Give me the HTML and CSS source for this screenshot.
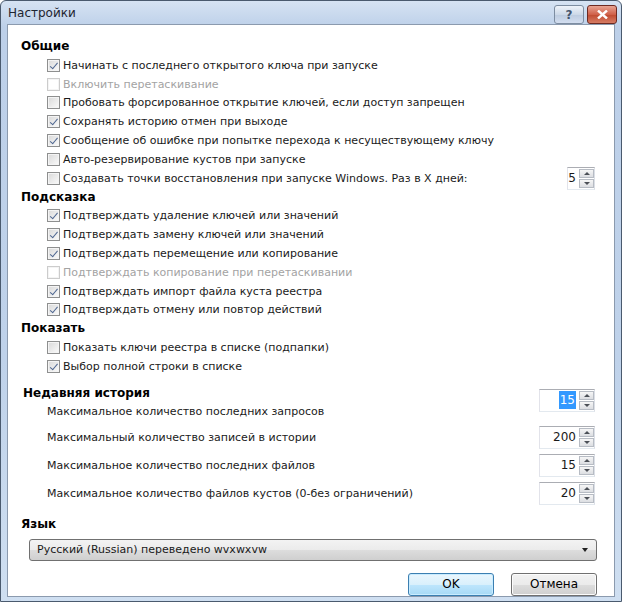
FILE: index.html
```html
<!DOCTYPE html>
<html lang="ru">
<head>
  <meta charset="UTF-8">
  <meta name="viewport" content="width=device-width, initial-scale=1.0">
  <title>Настройки</title>
  <link rel="stylesheet" href="styles.css">
</head>
<body>
  <div class="window">
    <div class="titlebar">
      <span class="title">Настройки</span>
      <div class="caption-btns">
        <span class="cap-btn cap-help">?</span>
        <span class="cap-btn cap-close">
          <svg width="11" height="9" viewBox="0 0 11 9"><path d="M1 0.5 L10 8.5 M10 0.5 L1 8.5" stroke="#fff" stroke-width="2.4"/></svg>
        </span>
      </div>
    </div>

    <div class="client">
      <h3 class="section-title">Общие</h3>
      <div class="check-list">
        <label class="check-row"><span class="box on"></span>Начинать с последнего открытого ключа при запуске</label>
        <label class="check-row disabled"><span class="box"></span>Включить перетаскивание</label>
        <label class="check-row"><span class="box"></span>Пробовать форсированное открытие ключей, если доступ запрещен</label>
        <label class="check-row"><span class="box on"></span>Сохранять историю отмен при выходе</label>
        <label class="check-row"><span class="box on"></span>Сообщение об ошибке при попытке перехода к несуществующему ключу</label>
        <label class="check-row"><span class="box"></span>Авто-резервирование кустов при запуске</label>
        <div class="check-row">
          <span class="box"></span>Создавать точки восстановления при запуске Windows. Раз в X дней:
          <div class="spin spin-small">
            <span class="spin-value">5</span>
            <span class="spin-btns"><span class="arrow up"></span><span class="arrow down"></span></span>
          </div>
        </div>
      </div>

      <h3 class="section-title">Подсказка</h3>
      <div class="check-list">
        <label class="check-row"><span class="box on"></span>Подтверждать удаление ключей или значений</label>
        <label class="check-row"><span class="box on"></span>Подтверждать замену ключей или значений</label>
        <label class="check-row"><span class="box on"></span>Подтверждать перемещение или копирование</label>
        <label class="check-row disabled"><span class="box"></span>Подтверждать копирование при перетаскивании</label>
        <label class="check-row"><span class="box on"></span>Подтверждать импорт файла куста реестра</label>
        <label class="check-row"><span class="box on"></span>Подтверждать отмену или повтор действий</label>
      </div>

      <h3 class="section-title">Показать</h3>
      <div class="check-list">
        <label class="check-row"><span class="box"></span>Показать ключи реестра в списке (подпапки)</label>
        <label class="check-row"><span class="box on"></span>Выбор полной строки в списке</label>
      </div>

      <div class="history-head">
        <div>
          <h3 class="section-title history-title">Недавняя история</h3>
          <div class="history-label">Максимальное количество последних запросов</div>
        </div>
        <div class="spin spin-first">
          <span class="spin-value"><span class="selected">15</span></span>
          <span class="spin-btns"><span class="arrow up"></span><span class="arrow down"></span></span>
        </div>
      </div>
      <div class="history-row">
        <span class="history-label">Максимальный количество записей в истории</span>
        <div class="spin">
          <span class="spin-value">200</span>
          <span class="spin-btns"><span class="arrow up"></span><span class="arrow down"></span></span>
        </div>
      </div>
      <div class="history-row">
        <span class="history-label">Максимальное количество последних файлов</span>
        <div class="spin">
          <span class="spin-value">15</span>
          <span class="spin-btns"><span class="arrow up"></span><span class="arrow down"></span></span>
        </div>
      </div>
      <div class="history-row">
        <span class="history-label">Максимальное количество файлов кустов (0-без ограничений)</span>
        <div class="spin">
          <span class="spin-value">20</span>
          <span class="spin-btns"><span class="arrow up"></span><span class="arrow down"></span></span>
        </div>
      </div>

      <h3 class="section-title lang-title">Язык</h3>
      <div class="combo">
        <span>Русский (Russian) переведено wvxwxvw</span>
        <span class="combo-arrow"></span>
      </div>

      <div class="buttons">
        <button class="btn btn-default">OK</button>
        <button class="btn">Отмена</button>
      </div>
    </div>
  </div>
</body>
</html>
```

FILE: styles.css
```css
* {
  margin: 0;
  padding: 0;
  box-sizing: border-box;
}

body {
  width: 622px;
  height: 602px;
  font-family: 'DejaVu Sans', Tahoma, sans-serif;
  font-size: 11px;
  color: #1a1a1a;
  background-color: #fff;
  overflow: hidden;
}

.window {
  display: flex;
  flex-direction: column;
  width: 622px;
  height: 602px;
  border: 1px solid #4a5a6e;
  border-radius: 6px 6px 0 0;
  background: linear-gradient(#d6e3f3, #bdd0e9 26px, #bfd2ea 60%, #cfdff1);
}

.titlebar {
  display: flex;
  align-items: center;
  height: 25px;
  padding: 0 4px 0 7px;
}

.title {
  font-size: 12px;
  color: #1e2530;
}

.caption-btns {
  display: flex;
  gap: 3px;
  margin-left: auto;
  margin-top: 4px;
}

.cap-btn {
  display: flex;
  align-items: center;
  justify-content: center;
  width: 30px;
  height: 19px;
  border: 1px solid #7d8da1;
  border-radius: 3px;
  font-weight: bold;
  font-size: 12px;
}

.cap-help {
  background: linear-gradient(#eef3fa, #cdd9e8 50%, #bccbdf 51%, #d3def0);
  color: #45566e;
}

.cap-close {
  background: linear-gradient(#e8a493, #d0614a 50%, #c04a30 51%, #d67c64);
  border-color: #6e2a22;
}

.client {
  flex: 1;
  margin: 0 6px 5px 6px;
  padding: 12px 19px 0 13px;
  background-color: #fff;
  border: 1px solid #8b9aae;
}

.section-title {
  font-size: 12px;
  font-weight: bold;
  line-height: 19px;
  height: 19px;
  color: #000;
}

.check-list {
  padding-left: 26px;
}

.check-row {
  display: flex;
  align-items: center;
  gap: 3px;
  height: 18.8px;
  white-space: nowrap;
}

.check-row.disabled {
  color: #a3a3a3;
}

.box {
  position: relative;
  flex: none;
  width: 13px;
  height: 13px;
  border: 1px solid #8e8f8f;
  background: linear-gradient(135deg, #d8d8d8, #fbfbfb);
  box-shadow: inset 0 0 0 1px #f4f4f4;
}

.disabled .box {
  border-color: #cccccc;
  background: #fff;
}

.box.on::after {
  content: "";
  position: absolute;
  left: 3.5px;
  top: 1px;
  width: 3px;
  height: 6.5px;
  border: solid #4e6690;
  border-width: 0 1.6px 1.6px 0;
  transform: rotate(40deg);
}

.spin {
  display: flex;
  width: 56px;
  height: 23px;
  margin-left: auto;
  border: 1px solid #abadb3;
  border-color: #abadb3 #dbdfe6 #e3e9ef #e2e3ea;
  background-color: #fff;
}

.spin-small {
  width: 28px;
}

.spin-value {
  flex: 1;
  display: flex;
  align-items: center;
  justify-content: flex-end;
  padding-right: 3px;
  font-size: 12px;
}

.selected {
  background-color: #3399ff;
  color: #fff;
  padding: 2px 1px;
}

.spin-btns {
  display: flex;
  flex-direction: column;
  gap: 1px;
  width: 15px;
  padding: 1px 0 1px;
}

.arrow {
  flex: 1;
  display: flex;
  align-items: center;
  justify-content: center;
  border: 1px solid #b7bcc4;
  background: linear-gradient(#f6f6f6, #dcdee2);
}

.arrow::after {
  content: "";
  border-left: 3px solid transparent;
  border-right: 3px solid transparent;
}

.arrow.up::after {
  border-bottom: 3px solid #4b4f56;
}

.arrow.down::after {
  border-top: 3px solid #4b4f56;
}

.history-head {
  display: flex;
  margin-top: 8px;
  padding-left: 2px;
}

.history-head .spin {
  margin-top: 5px;
}

.history-head .history-label {
  height: 18px;
  line-height: 18px;
  padding-left: 24px;
}

.history-row {
  display: flex;
  align-items: center;
  height: 23px;
  margin-top: 5px;
  padding-left: 26px;
}

.lang-title {
  margin-top: 10px;
}

.combo {
  display: flex;
  align-items: center;
  height: 22px;
  margin: 5px -2px 0 8px;
  padding: 0 8px 0 7px;
  border: 1px solid #707070;
  border-radius: 3px;
  background: linear-gradient(#f3f3f3, #ebebeb 50%, #dddddd 51%, #cfcfcf);
}

.combo-arrow {
  margin-left: auto;
  border-left: 3.5px solid transparent;
  border-right: 3.5px solid transparent;
  border-top: 4px solid #222;
}

.buttons {
  display: flex;
  justify-content: flex-end;
  gap: 17px;
  margin-top: 12px;
  margin-right: -2px;
}

.btn {
  width: 86px;
  height: 23px;
  font-family: 'DejaVu Sans', Tahoma, sans-serif;
  font-size: 12px;
  color: #000;
  border: 1px solid #707070;
  border-radius: 3px;
  background: linear-gradient(#f2f2f2, #ebebeb 50%, #dddddd 51%, #cfcfcf);
  box-shadow: inset 0 0 0 1px #fcfcfc;
}

.btn-default {
  border-color: #3c7fb1;
  background: linear-gradient(#eaf6fd, #d9f0fc 50%, #bee6fd 51%, #a7d9f5);
  box-shadow: inset 0 0 0 1px #c9ecff;
}
```
